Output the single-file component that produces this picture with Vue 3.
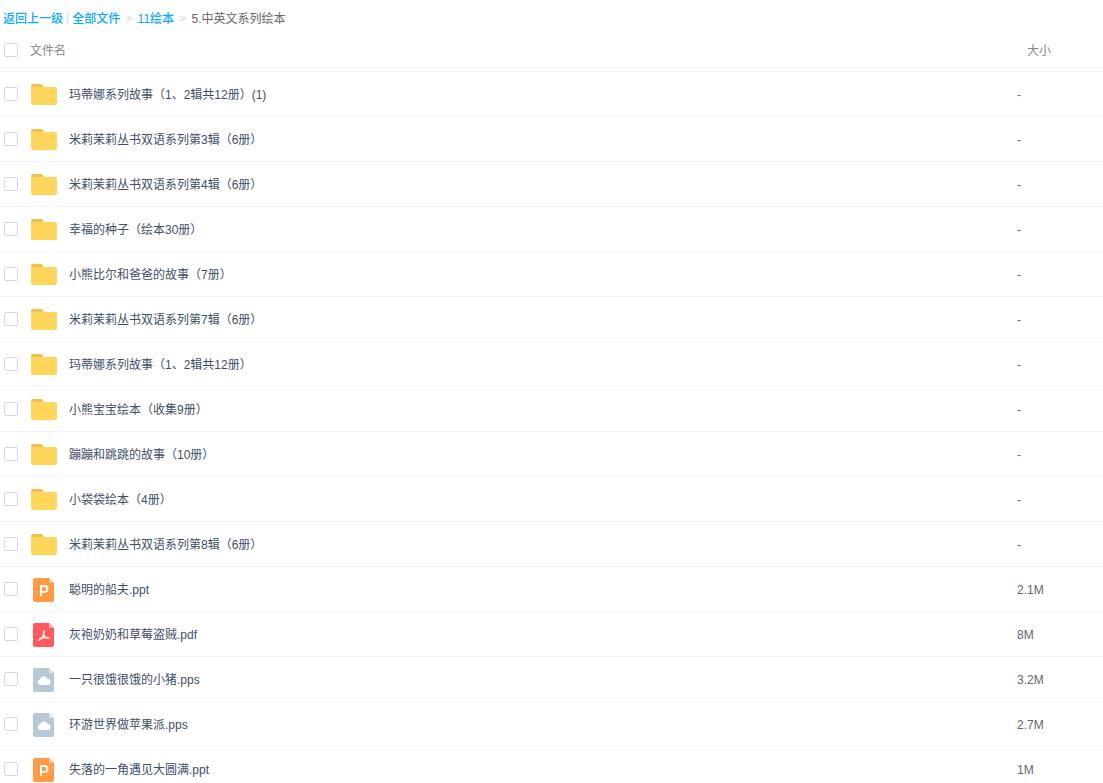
<script setup>
const rows = [
  { name: '玛蒂娜系列故事（1、2辑共12册）(1)', size: '-', type: 'folder' },
  { name: '米莉茉莉丛书双语系列第3辑（6册）', size: '-', type: 'folder' },
  { name: '米莉茉莉丛书双语系列第4辑（6册）', size: '-', type: 'folder' },
  { name: '幸福的种子（绘本30册）', size: '-', type: 'folder' },
  { name: '小熊比尔和爸爸的故事（7册）', size: '-', type: 'folder' },
  { name: '米莉茉莉丛书双语系列第7辑（6册）', size: '-', type: 'folder' },
  { name: '玛蒂娜系列故事（1、2辑共12册）', size: '-', type: 'folder' },
  { name: '小熊宝宝绘本（收集9册）', size: '-', type: 'folder' },
  { name: '蹦蹦和跳跳的故事（10册）', size: '-', type: 'folder' },
  { name: '小袋袋绘本（4册）', size: '-', type: 'folder' },
  { name: '米莉茉莉丛书双语系列第8辑（6册）', size: '-', type: 'folder' },
  { name: '聪明的船夫.ppt', size: '2.1M', type: 'ppt' },
  { name: '灰袍奶奶和草莓盗贼.pdf', size: '8M', type: 'pdf' },
  { name: '一只很饿很饿的小猪.pps', size: '3.2M', type: 'pps' },
  { name: '环游世界做苹果派.pps', size: '2.7M', type: 'pps' },
  { name: '失落的一角遇见大圆满.ppt', size: '1M', type: 'ppt' },
]
const fileColor = { ppt: '#ff9a45', pdf: '#ff5a5f', pps: '#b9c8d6' }
const foldColor = { ppt: '#ffc48f', pdf: '#ffa0a3', pps: '#dbe3ea' }
</script>

<template>
  <div class="page">
    <nav class="crumbs">
      <a>返回上一级</a><span class="bar">|</span><a>全部文件</a><span class="sep">&gt;</span><a>11绘本</a><span class="sep">&gt;</span><span class="current">5.中英文系列绘本</span>
    </nav>
    <div class="head">
      <span class="check"></span>
      <span class="head-name">文件名</span>
      <span class="head-size">大小</span>
    </div>
    <div class="rule"></div>
    <ul class="list">
      <li v-for="row in rows" :key="row.name" class="row">
        <span class="check"></span>
        <span class="icon">
          <svg v-if="row.type === 'folder'" class="folder" width="26" height="21" viewBox="0 0 26 21">
            <path d="M0 2a2 2 0 0 1 2-2h8a2 2 0 0 1 2 1.500l.5 1.500H0z" fill="#f0c050" />
            <path d="M0 4a1 1 0 0 1 1-1h23.500a1.500 1.500 0 0 1 1.500 1.500V19a2 2 0 0 1-2 2H2a2 2 0 0 1-2-2z" fill="#ffd65c" />
          </svg>
          <svg v-else class="file" width="21" height="24" viewBox="0 0 21 24">
            <path d="M2 0h14l5 5v17a2 2 0 0 1-2 2H2a2 2 0 0 1-2-2V2a2 2 0 0 1 2-2z" :fill="fileColor[row.type]" />
            <path d="M16 0l5 5h-4a1 1 0 0 1-1-1z" :fill="foldColor[row.type]" />
            <path v-if="row.type === 'ppt'" d="M8 18V8h3.500a3 3 0 0 1 0 6H8" fill="none" stroke="#fff" stroke-width="2" />
            <path v-if="row.type === 'pdf'" d="M11 8c.6 3.500-2 7.500-5.500 9.500M10.500 12.500c1.500 1.500 3 2.500 5.500 2.500M7 15.500c2.500-1 5-1.200 8.500-.7" fill="none" stroke="#fff" stroke-width="1.300" stroke-linecap="round" />
            <path v-if="row.type === 'pps'" d="M7.300 17a2.800 2.800 0 0 1-.6-5.500 4.300 4.300 0 0 1 8-.5 3 3 0 0 1-.2 6z" fill="#fff" />
          </svg>
        </span>
        <span class="name">{{ row.name }}</span>
        <span class="size">{{ row.size }}</span>
      </li>
    </ul>
  </div>
</template>

<style>
html, body { margin: 0; background: #fff; overflow: hidden; }
</style>

<style scoped>
.page {
  width: 1103px;
  height: 783px;
  overflow: hidden;
  font-family: "Liberation Sans", "Noto Sans CJK SC", sans-serif;
  font-size: 12px;
  color: #424e67;
}
.crumbs {
  display: flex;
  align-items: center;
  height: 18px;
  padding: 8px 0 2px 3px;
  color: #09aaff;
  font-weight: 500;
}
.bar { margin: 0 3px; color: #c4d8f4; font-weight: 400; }
.sep { margin: 0 5.500px; padding-top: 2px; color: #c4d8f4; font-weight: 400; font-size: 11px; }
.current { color: #666; font-weight: 400; }
.head {
  display: flex;
  align-items: center;
  height: 31px;
  padding-top: 6px;
  color: #888;
}
.head-name { margin-left: 12px; }
.head-size { margin-left: auto; margin-right: 52px; }
.rule {
  height: 0;
  margin-top: 2px;
  border-top: 1px solid #f1f4f9;
}
.list {
  list-style: none;
  margin: 3px 0 0;
  padding: 0;
  border-top: 1px solid #f1f4f9;
}
.row {
  display: flex;
  align-items: center;
  height: 44px;
  border-bottom: 1px solid #f1f4f9;
}
.check {
  box-sizing: border-box;
  width: 14px;
  height: 14px;
  margin-left: 4px;
  flex: none;
  border: 1px solid #d4d9e3;
  border-radius: 2px;
  background: #fff;
}
.icon {
  display: flex;
  justify-content: center;
  width: 26px;
  margin-left: 13px;
  flex: none;
}
.folder { margin-top: 1px; }
.file { margin-top: 1px; margin-right: 1px; }
.name { margin-left: 12px; flex: 1; padding-bottom: 2px; }
.size { width: 86px; flex: none; padding-top: 2px; color: #666; }
</style>
